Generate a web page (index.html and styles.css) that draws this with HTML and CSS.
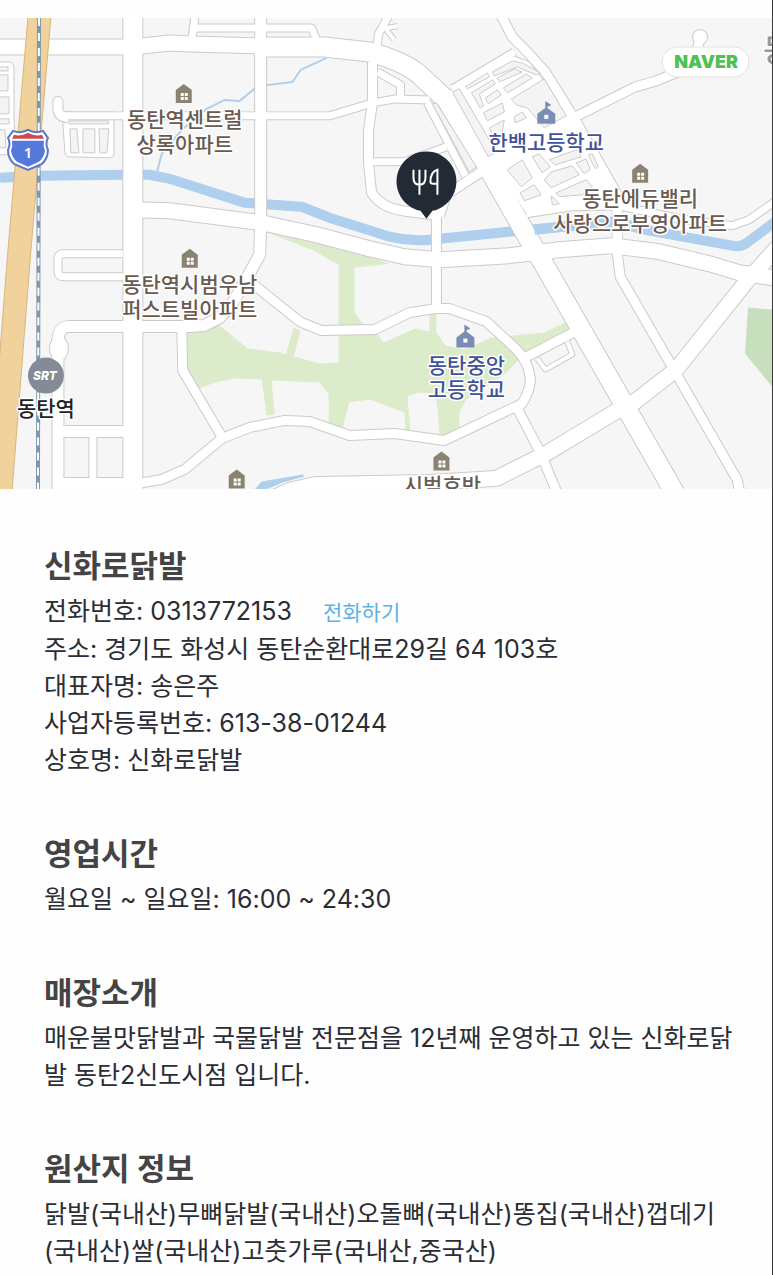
FILE: index.html
```
<!DOCTYPE html>
<html lang="ko">

  <head>
    <meta charset="utf-8">
    <meta name="viewport" content="width=device-width, initial-scale=1">
    <title>신화로닭발</title>
    <link rel="stylesheet" href="styles.css">
  </head>

  <body>
    <main class="page">

      <!-- ******* map ************************ -->
      <svg class="map" viewBox="0 18 773 472" role="img" aria-label="지도">
        <defs>
          <g id="r4">
            <path d="M538 359L546 370L573 355L568 342"/>
            <path d="M383 29L398 26M387 30L395 40"/>
          </g>
          <g id="r7">
            <path d="M377 50L379 34L389 16"/>
            <path d="M195 18L192 40"/>
            <path d="M196 28H312L317 40"/>
            <path d="M453 89L515 52"/>
            <path d="M93 432V484"/>
            <path d="M373 162H410M405 162L447 147"/>
            <path d="M378 72L401 85V98"/>
            <path d="M62 116H262L330 116L373 103L396 99L430 100"/>
            <path d="M123 254H63Q58 254 58 260V271Q58 277 63 277H133"/>
            <path d="M527 214L573 207L620 206L680 219L733 226L750 220L776 202"/>
            <path d="M428 103L466 176"/>
          </g>
          <g id="r9">
            <path d="M58 100V110Q59 117 68 118"/>
            <path d="M373 62V103L369 130V163L372 193Q382 208 403 211L440 216"/>
            <path d="M440 216L447 195L488 168L545 133L576 117L636 87L657 81L684 70L697 58L701 37"/>
            <path d="M437 212V310"/>
            <path d="M253 284L300 322L322 331L375 330L410 313L436 309L450 309L487 322L513 346Q531 362 531 383Q528 400 518 409L541 453L558 494"/>
            <path d="M182 328L183 371L222 437"/>
            <path d="M133 485L162 480L185 470L222 439L250 428L285 421L310 422L350 436L395 434L445 441L523 404"/>
            <path d="M524 359L574 333"/>
            <path d="M501 14L513 37L528 52L546 72L576 120L618 195V253L621 277L673 367L738 480L741 494"/>
          </g>
          <g id="r10">
            <path d="M261 14V225L260 255L248 277L232 305L220 318L204 326L190 327H68Q57 328 58 345V490"/>
            <path d="M58 432H133M58 484H133"/>
          </g>
          <g id="r15">
            <path d="M-5 47H133L170 43L190 44L262 46"/>
            <path d="M133 210L170 211L262 223L317 235L370 249L405 257L440 260L510 256L560 250L612 246L660 252L710 264L740 273L780 279"/>
            <path d="M262 504L290 491L317 485L430 483L497 479L547 454L620 410L636 402L677 370L749 280L780 246"/>
          </g>
          <g id="r19">
            <path d="M133 14V494"/>
            <path d="M255 47H325L370 52Q400 60 418 73L447 100L487 165L531 242L542 260L676 494"/>
          </g>
        </defs>

        <rect class="land" y="18" width="773" height="472"/>

        <!-- parks -->
        <path class="park" d="M187 332L205 329L216 323L248 349L280 353L320 364L339 363V265L312 250L268 233L347 250L390 264L355 268V313L363 324L375 330L384 343L416 329L430 332V310H437V333L446 346L465 350L492 338L545 333L566 323L571 331L525 355L505 375L467 400L460 413V436H440L438 408L436 394L420 393L408 397L411 432H406L405 413L370 400L350 403L345 420L343 432L329 425V395L320 383L272 381L275 415L267 416L262 380L235 379L215 383L200 389L187 370Z"/>
        <path class="park" d="M294 328L301 331L294 357L286 356Z"/>
        <path class="forest" d="M749 308L773 310V387L746 354Z"/>

        <!-- water -->
        <path class="river" d="M0 178L40 176L123 175H150L170 179L245 203L302 207L330 218L390 237Q410 242 430 240L510 232L613 222L645 230L733 246Q742 248 748 243L776 222"/>
        <path class="stream" d="M157 173L162 154L182 130L207 109L225 100L240 101L257 87L268 85L293 82L301 70L327 58"/>

        <!-- blocks on the left -->
        <path class="plot-road" d="M-2 62H10Q14 63 14 70V120L17 155H-2Z"/>
        <path class="plot-road" d="M62 112H114V156Q113 158 108 158L68 157Q65 156 65 152Z"/>
        <g class="plot">
          <path d="M-1 67H8V71H-1ZM-1 75H8V91H-1ZM-1 97H9V114H-1ZM-1 119H9V124H-1ZM-1 130H5L6 148H-1Z"/>
          <path d="M69 121H109V124H69ZM70 129H77L79 153H71ZM83 129H95V153H83ZM99 129H109L107 153H100Z"/>
        </g>

        <!-- outlines first, white surface on top -->
        <g class="edge">
          <use href="#r4" stroke-width="6"/>
          <use href="#r7" stroke-width="9"/>
          <use href="#r9" stroke-width="11"/>
          <use href="#r10" stroke-width="13"/>
          <use href="#r15" stroke-width="17"/>
          <use href="#r19" stroke-width="21"/>
          <circle cx="701" cy="37" r="6"/>
          <circle cx="58" cy="101" r="3"/>
          <ellipse cx="59" cy="349" rx="8" ry="11"/>
        </g>
        <path class="plot-road" d="M450 91L512 55L530 62L575 122L619 200L618 206L526 213L488 155Z"/>
        <g class="surface">
          <use href="#r4" stroke-width="4"/>
          <use href="#r7" stroke-width="7"/>
          <use href="#r9" stroke-width="9"/>
          <use href="#r10" stroke-width="11"/>
          <use href="#r15" stroke-width="15"/>
          <use href="#r19" stroke-width="19"/>
          <circle cx="701" cy="37" r="7"/>
          <circle cx="58" cy="101" r="4"/>
          <ellipse cx="59" cy="349" rx="9" ry="12"/>
        </g>
        <path class="river" d="M535 230L613 222L632 226"/>
        <path class="cover" d="M618 206V245"/>
        <path class="pond" d="M255 490L262 482L303 475L305 477L283 483L267 490Z"/>

        <!-- blocks around the school -->
        <g class="plot">
          <path d="M433 104L437 103L477 167L470 172ZM453 92L460 89L497 152L489 157Z"/>
          <path d="M466 87L488 73L490 77L468 89ZM472 93L493 80L496 84L480 94L484 106L481 108ZM486 98L498 90L502 95L489 104ZM484 113L503 103L505 112L488 121Z"/>
          <path d="M493 72L513 61L523 63L541 73L537 75L518 67L495 76ZM498 78L515 69L523 72L500 82ZM504 88L527 74L533 78L508 93Z"/>
          <path d="M512 99L545 79L567 116L545 128L528 108L517 105ZM515 117L523 112L527 118L516 123ZM490 128L505 120L502 135L494 137Z"/>
          <path d="M508 170L523 160L533 178L522 187ZM521 193L535 185L542 195L525 201ZM533 157L540 154L551 167L543 173Z"/>
          <path d="M545 180L552 172L573 166L580 175L552 188ZM577 163L587 159L591 170L585 174ZM589 155L593 154L599 167L596 169Z"/>
          <path d="M557 193L587 180L593 187L583 195L560 197ZM550 160L577 150L582 157L556 165ZM552 196L560 204L553 205Z"/>
        </g>

        <!-- expressway and railway -->
        <path class="highway" d="M28 17L8 250L-11 492H12L31 250L51 17Z"/>
        <path class="rail" d="M39 18L38 490"/>
        <path class="rail-dash" d="M39 18L38 490"/>
        <path class="shield-rim" d="M28 130Q35 134 43 131L48 138Q45 144 48 150Q48 159 42 164L28 170L14 164Q8 159 8 150Q11 144 8 138L13 131Q21 134 28 130Z"/>
        <path class="shield" d="M12 141H44Q43 146 45 151Q44 158 39 162L28 167L17 162Q12 158 11 151Q13 146 12 141Z"/>
        <path class="shield-top" d="M14 135Q21 137 28 133Q35 137 42 135L44 139H12Z"/>
        <text class="shield-no" x="28" y="158">1</text>

        <!-- station -->
        <circle class="station" cx="46" cy="376" r="18"/>
        <text class="srt" x="45" y="380">SRT</text>

        <!-- apartment and school marks -->
        <defs>
          <g id="house">
            <path class="house" d="M0 -10L8 -4V9H-8V-4Z"/>
            <path class="window" d="M-3 -1H0V2H-3ZM1 -1H4V2H1ZM-3 3H0V6H-3ZM1 3H4V6H1Z"/>
          </g>
          <g id="school">
            <path class="school" d="M-1 -12L5 -8L1 -6V-5L9 1V11H-9V1L-1 -5Z"/>
            <path class="window" d="M-2 2H2V6H-2Z"/>
          </g>
        </defs>
        <use href="#house" x="184" y="94"/>
        <use href="#house" x="190" y="259"/>
        <use href="#house" x="641" y="174"/>
        <use href="#house" x="442" y="462"/>
        <use href="#house" x="237" y="480"/>
        <use href="#school" x="547" y="113"/>
        <use href="#school" x="466" y="337"/>

        <g class="label">
          <text x="185" y="127">동탄역센트럴</text>
          <text x="185" y="152">상록아파트</text>
          <text x="190" y="292">동탄역시범우남</text>
          <text x="190" y="317">퍼스트빌아파트</text>
          <text x="641" y="206">동탄에듀밸리</text>
          <text x="641" y="231">사랑으로부영아파트</text>
          <text x="443" y="494">시범호반</text>
        </g>
        <g class="label label-school">
          <text x="547" y="150">한백고등학교</text>
          <text x="467" y="373">동탄중앙</text>
          <text x="467" y="398">고등학교</text>
        </g>
        <text class="label label-station" x="46" y="417">동탄역</text>
        <text class="label label-town" x="764" y="61">동</text>

        <!-- NAVER mark -->
        <rect class="naver-box" x="663" y="47" width="87" height="30" rx="15"/>
        <text class="naver" x="707" y="68">NAVER</text>

        <!-- pin -->
        <path class="pin" d="M427 219L421 211A30 30 0 1 1 433 211Z"/>
        <path class="cutlery" d="M414 170V178Q414 185 420 185Q426 185 426 178V170M420 170V195M438 195V170Q431 172 431 182Q431 184 434 184H438"/>
      </svg>

      <!-- ******* shop info ************************ -->
      <div class="info">
        <section>
          <h2>신화로닭발</h2>
          <p>전화번호: 0313772153 <a class="call" href="tel:0313772153">전화하기</a></p>
          <p>주소: 경기도 화성시 동탄순환대로29길 64 103호</p>
          <p>대표자명: 송은주</p>
          <p>사업자등록번호: 613-38-01244</p>
          <p>상호명: 신화로닭발</p>
        </section>

        <section>
          <h2>영업시간</h2>
          <p>월요일 ~ 일요일: 16:00 ~ 24:30</p>
        </section>

        <section>
          <h2>매장소개</h2>
          <p>매운불맛닭발과 국물닭발 전문점을 12년째 운영하고 있는 신화로닭발 동탄2신도시점 입니다.</p>
        </section>

        <section>
          <h2>원산지 정보</h2>
          <p>닭발(국내산)무뼈닭발(국내산)오돌뼈(국내산)똥집(국내산)껍데기(국내산)쌀(국내산)고춧가루(국내산,중국산)</p>
        </section>
      </div>

    </main>
  </body>

</html>
```
FILE: styles.css
```
body {
    margin: 0;
    background-color: #fefefe;
    color: #2b2d35;
    font-family: Inter, "Noto Sans CJK KR", sans-serif;
    font-size: 25px;
    line-height: 37px;
}

.page {
    box-sizing: border-box;
    min-height: 100vh;
    padding-top: 18px;
    border-right: 1px solid #3a3a3a;
}

/* map */
.map {
    display: block;
    width: 100%;
    height: auto;
}

.land {
    fill: #f6f6f6;
}

.park {
    fill: #dcebc9;
}

.forest {
    fill: #c7dfbd;
}

.river, .stream {
    fill: none;
    stroke: #aecfed;
    stroke-width: 10px;
}

.stream {
    stroke-width: 2px;
}

.pond {
    fill: #aecfed;
}

.edge {
    fill: none;
    stroke: #cbcbcb;
    stroke-linejoin: round;
}

.edge circle, .edge ellipse {
    stroke-width: 4px;
}

.surface {
    fill: none;
    stroke: white;
    stroke-linejoin: round;
}

.surface circle, .surface ellipse {
    fill: white;
    stroke: none;
}

.cover {
    fill: none;
    stroke: white;
    stroke-width: 9px;
}

.plot-road {
    fill: white;
    stroke: #cbcbcb;
}

.plot {
    fill: #f4f4f4;
    stroke: #cbcbcb;
    stroke-linejoin: round;
}

.highway {
    fill: #f1d29c;
    stroke: #d9b57f;
}

.rail {
    stroke: #7e97ae;
    stroke-width: 4px;
}

.rail-dash {
    stroke: white;
    stroke-width: 2px;
    stroke-dasharray: 8 7;
}

.shield-rim {
    fill: white;
    stroke: #5877c4;
    stroke-width: 2px;
}

.shield {
    fill: #5478dc;
}

.shield-top {
    fill: #cf4a50;
}

.shield-no {
    fill: white;
    font-family: "Noto Sans", sans-serif;
    font-size: 15px;
    font-weight: 600;
    text-anchor: middle;
}

.station {
    fill: #858b96;
}

.srt {
    fill: white;
    font-size: 12px;
    font-style: italic;
    font-weight: 800;
    text-anchor: middle;
}

.house {
    fill: #8a8370;
}

.school {
    fill: #7b8db4;
}

.window {
    fill: white;
}

.label {
    fill: #6a5a50;
    stroke: white;
    stroke-width: 3px;
    stroke-linejoin: round;
    paint-order: stroke;
    font-family: "Noto Sans CJK KR", sans-serif;
    font-size: 21px;
    font-weight: 500;
    text-anchor: middle;
}

.label-school {
    fill: #40539a;
}

.label-station {
    fill: #222;
}

.label-town {
    fill: #999;
    font-size: 31px;
    text-anchor: start;
}

.naver-box {
    fill: white;
    stroke: #e2e2e2;
}

.naver {
    fill: #4fc14f;
    font-size: 18px;
    font-weight: 900;
    text-anchor: middle;
}

.pin {
    fill: #212a35;
}

.cutlery {
    fill: none;
    stroke: white;
    stroke-width: 2px;
}

/* shop info */
.info {
    display: flex;
    flex-direction: column;
    gap: 56px;
    padding: 58px 36px 4px 44px;
}

h2 {
    margin: 0 0 9px;
    color: #444;
    font-size: 31px;
    font-weight: 700;
}

p {
    margin: 0;
}

.call {
    margin-left: 24px;
    color: #5ab2e6;
    font-size: 21px;
    text-decoration: none;
}
```
